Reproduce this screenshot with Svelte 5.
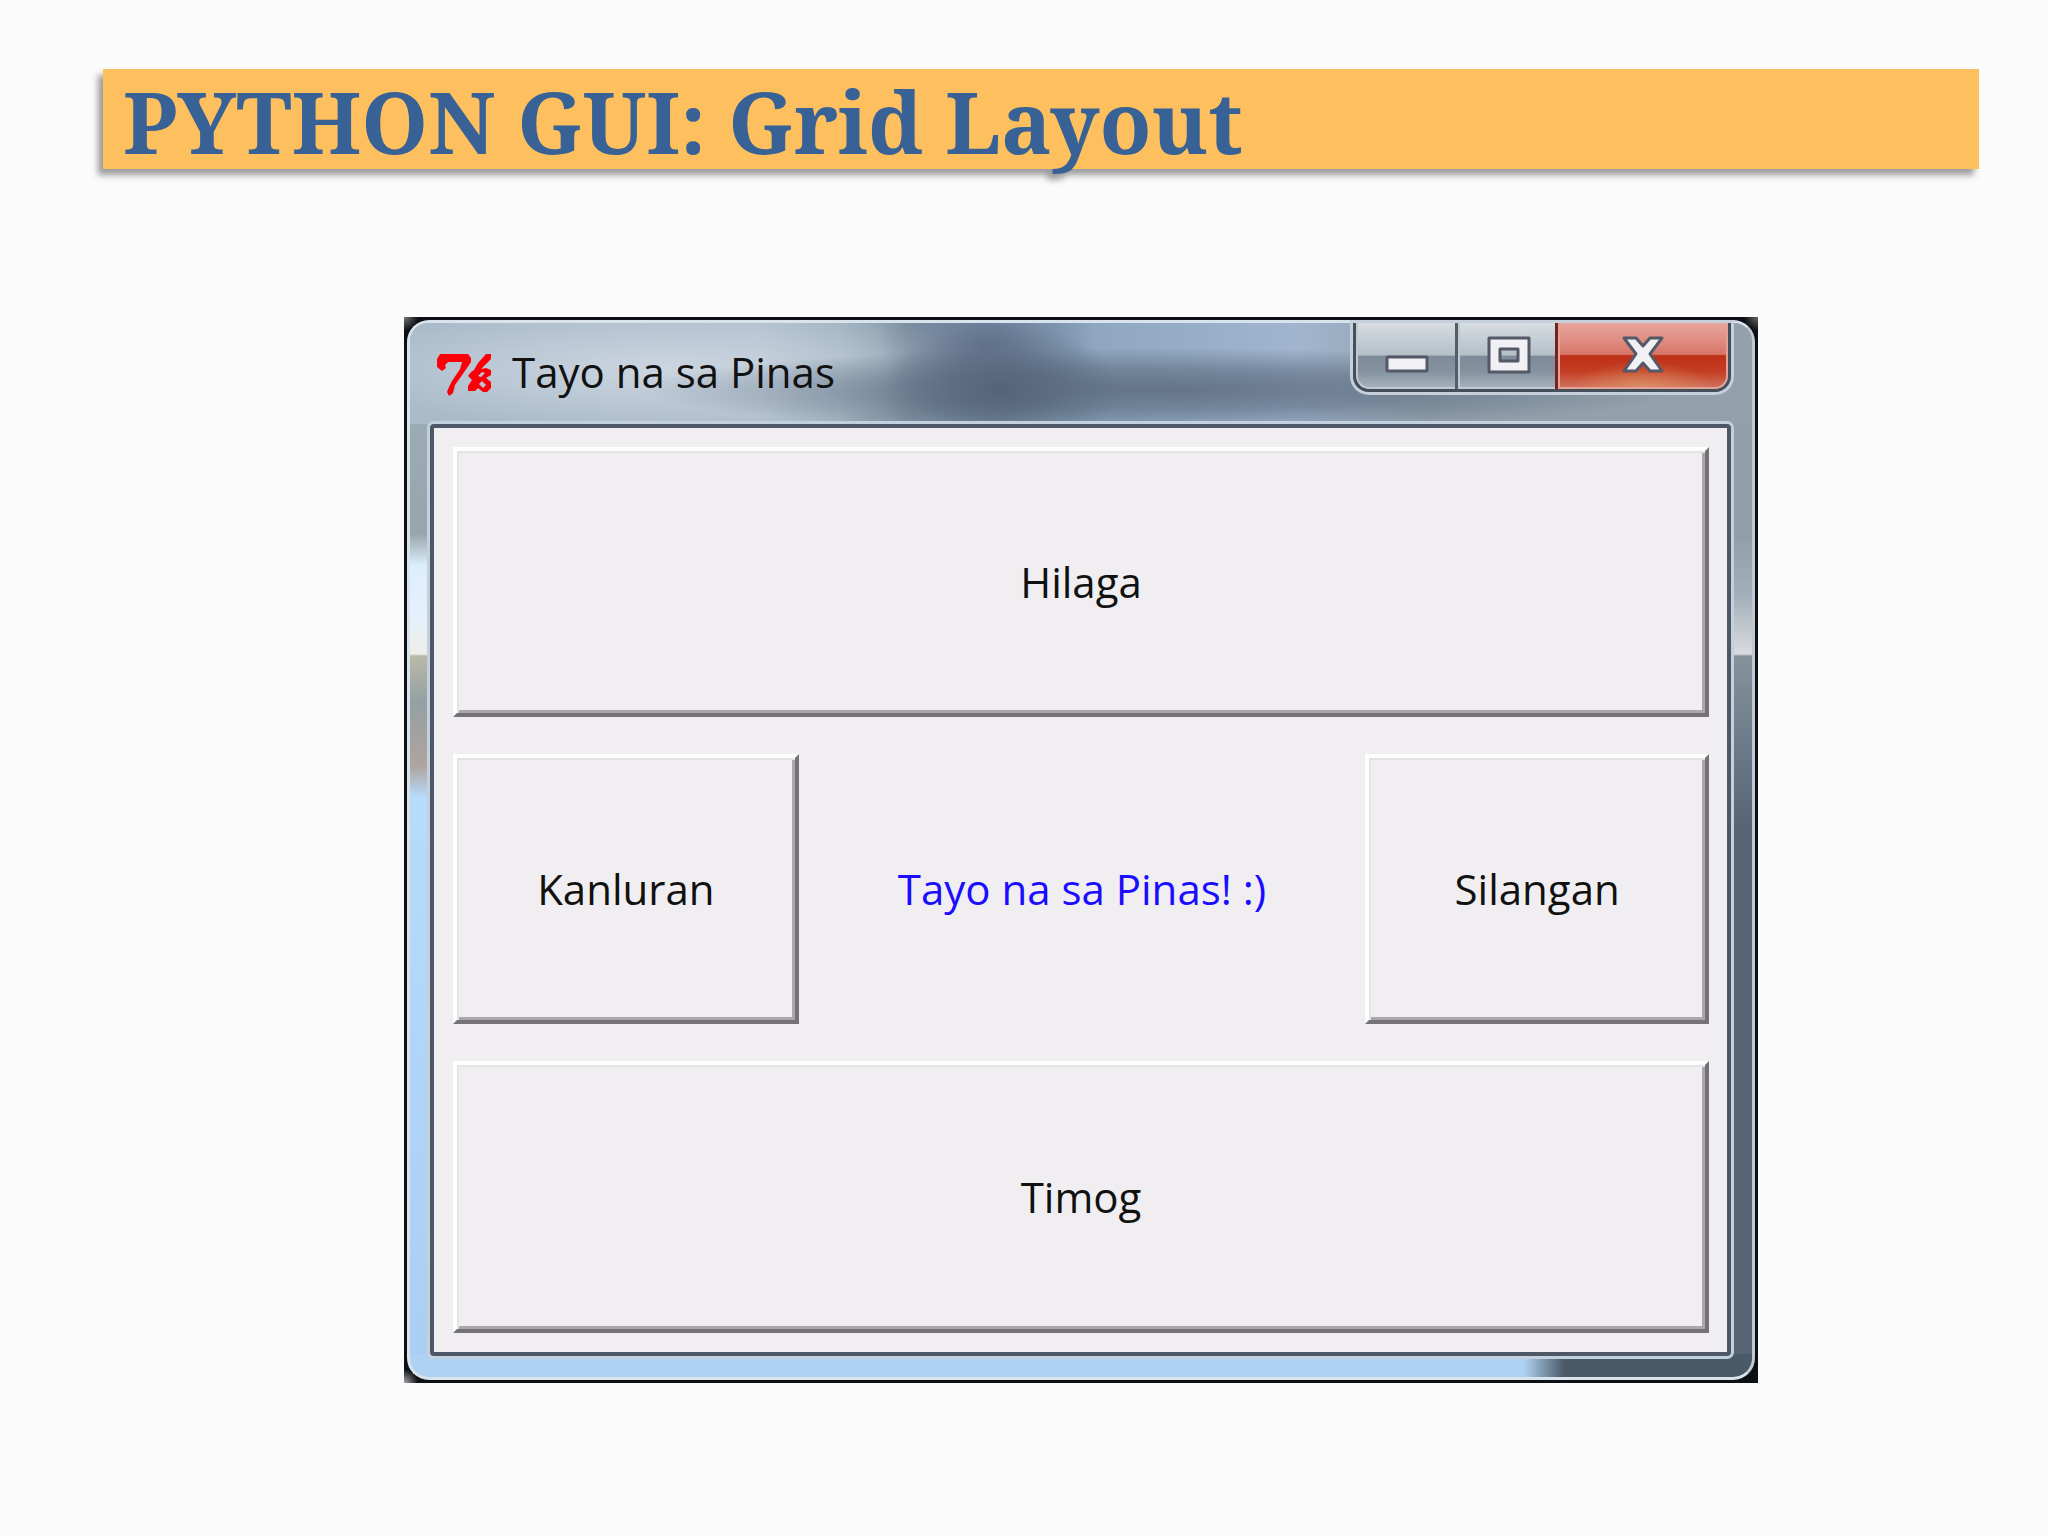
<script>
  const heading = 'PYTHON GUI: Grid Layout';
  const caption = 'Tayo na sa Pinas';
</script>

<main>
  <h1>{heading}</h1>
  <div class="stage">
    <section class="window" aria-label={caption}>
      <div class="frame">
        <header>
          <svg class="tk" viewBox="0 0 54 42" aria-hidden="true">
            <path d="M3 0H31L34 4V8L30 14L23 24L18 31L16 39L12 42L10 38L12 33L15 27L23 15L25 8H11L8 11L9 14L5 17L0 13V5Z" />
            <path fill-rule="evenodd" d="M49 0H54V5L49 10L44 15L49 14L54 16V21L49 24L54 28V34L50 38H46L41 34L38 37H31V32L35 26L31 22L34 18L37 16L41 9ZM45 18L41 22L44 23L48 19ZM45 27L42 30L46 34L49 31Z" />
          </svg>
          <h2>{caption}</h2>
          <div class="controls">
            <button class="min" aria-label="Minimize">
              <svg viewBox="0 0 44 38"><rect x="2" y="21" width="40" height="14" rx="1" /></svg>
            </button>
            <button class="max" aria-label="Maximize">
              <svg viewBox="0 0 44 38"><path fill-rule="evenodd" d="M2 2H42V36H2ZM13 13V25H31V13Z" /></svg>
            </button>
            <button class="close" aria-label="Close">
              <svg viewBox="0 0 44 38"><path d="M3 2H15L22 10L29 2H41L29 18L41 35H29L22 27L15 35H3L15 18Z" /></svg>
            </button>
          </div>
        </header>
        <div class="client">
          <button class="tile wide">Hilaga</button>
          <button class="tile">Kanluran</button>
          <p>Tayo na sa Pinas! :)</p>
          <button class="tile">Silangan</button>
          <button class="tile wide">Timog</button>
        </div>
      </div>
    </section>
  </div>
</main>

<style>
  :global(body) { margin: 0; background: #fbfbfc; }
  main { box-sizing: border-box; min-height: 100vh; padding: 69px 0 40px; }
  h1 {
    margin: 0 69px 0 103px;
    padding-left: 20px;
    height: 100px;
    background: #fec05e;
    color: #386296;
    font: bold 85px/104px "Noto Serif", "Droid Serif", "DejaVu Serif", serif;
    white-space: nowrap;
    filter: drop-shadow(-5px 6px 3px rgba(60, 60, 60, 0.5));
  }
  .stage { display: grid; grid-template-columns: 404fr 1354fr 290fr; margin-top: 148px; }
  .window {
    grid-column: 2;
    padding: 3px;
    background:
      radial-gradient(circle at 0 0, #777 0, transparent 14px),
      radial-gradient(circle at 100% 0, #666 0, transparent 14px),
      radial-gradient(circle at 0 100%, #aaa 0, transparent 14px),
      #0c0f14;
  }
  .frame {
    padding: 0 21px 21px 20px;
    border: 3px solid #d9e3ec;
    border-right-color: #bfcbd4;
    border-radius: 22px;
    background:
      linear-gradient(90deg, #b0d2f2 0, #b0d2f2 83%, #4a5968 86%, #4a5968) bottom / 100% 23px no-repeat,
      linear-gradient(#9fb0bd 0, #97a6ac 20%, #dceefa 23%, #e6f1fc 28%, #edeee9 31.4%, #b9b9a8 31.6%, #94a0a3 36%, #b0a49f 42%, #b7dbfa 45%, #aacdf2) left / 26px 100% no-repeat,
      linear-gradient(#93a1ac 0, #8f9ea8 20%, #a4b0b9 26%, #dadae0 31.4%, #84939a 31.6%, #6b7b8a 40%, #566475 48%, #566475) right / 26px 100% no-repeat,
      #9fb2c4;
  }
  header {
    display: flex;
    align-items: flex-start;
    height: 101px;
    margin: 0 -21px 0 -20px;
    padding: 0 21px 0 27px;
    border-radius: 18px 18px 0 0;
    background:
      radial-gradient(ellipse 120px 66px at 44% 66%, rgba(82, 98, 118, 0.9) 0, transparent 100%),
      radial-gradient(ellipse 110px 90px at 43% 20%, rgba(98, 114, 142, 0.9) 0, transparent 100%),
      radial-gradient(ellipse 520px 42px at 56% 66%, rgba(94, 110, 130, 0.9) 0, rgba(94, 110, 130, 0.6) 50%, transparent 100%),
      radial-gradient(ellipse 360px 60px at 19% 45%, #cbd5e0 0, transparent 100%),
      linear-gradient(90deg, #a9bac9 0, #b0bfcd 26%, #a0b2c0 32%, #8496a6 37%, #8ba4bc 48%, #a1b5cf 66%, #93a1ac 76%, #93a1ac);
  }
  .tk { width: 54px; height: 42px; margin-top: 31px; fill: #fb0009; }
  h2, p, .tile { font: 42px/56px "Open Sans", "Noto Sans", sans-serif; color: #111; }
  h2 { flex: 1; margin: 21px 0 0 21px; white-space: nowrap; }
  .controls {
    display: flex;
    height: 66px;
    border: 3px solid #444f5a;
    border-top: 0;
    border-radius: 0 0 16px 16px;
    box-shadow: 0 0 0 3px #c5d0da;
    overflow: hidden;
  }
  .controls button {
    display: flex;
    justify-content: center;
    padding: 13px 0 0;
    border: 2px solid #c0c9d1;
    border-top: 0;
    background: linear-gradient(#d7dde2 0, #b4bfc7 50%, #7e8c99 52%, #8492a0 75%, #a3b1bb);
  }
  .controls .min { width: 102px; border-radius: 0 0 0 13px; }
  .controls .max { width: 100px; border-right: 0; box-shadow: -3px 0 0 #535e69; }
  .controls .close {
    width: 170px;
    border-color: #e3a198;
    border-radius: 0 0 13px 0;
    background:
      radial-gradient(ellipse 70px 26px at 50% 100%, rgba(226, 160, 110, 0.6) 0, transparent 100%),
      linear-gradient(#e9a79f 0, #d77668 49%, #bd3118 51%, #c43c22 75%, #d0705a);
    box-shadow: -3px 0 0 #74231e;
  }
  .controls svg { width: 44px; height: 38px; fill: #f1f1f5; stroke: #555967; stroke-width: 3; stroke-linejoin: round; }
  .client {
    display: grid;
    grid-template-columns: 346fr 567fr 344fr;
    grid-template-rows: 270px 270px 272px;
    row-gap: 37px;
    padding: 19px 18px 19px 19px;
    border: 4px solid #4d5765;
    border-radius: 4px;
    box-shadow: 0 0 0 3px #c3d1de;
    background: #f0eef1;
  }
  .tile {
    padding: 0;
    border: 4px solid;
    border-color: #fdfdfd #747276 #747276 #fdfdfd;
    background: #f0eef1;
    box-shadow: inset 2px 2px 0 #e5e3e6, inset -3px -3px 0 #a9a7aa;
  }
  .wide { grid-column: 1 / -1; }
  p { margin: 0; align-self: center; text-align: center; color: #1a0cff; }
</style>
